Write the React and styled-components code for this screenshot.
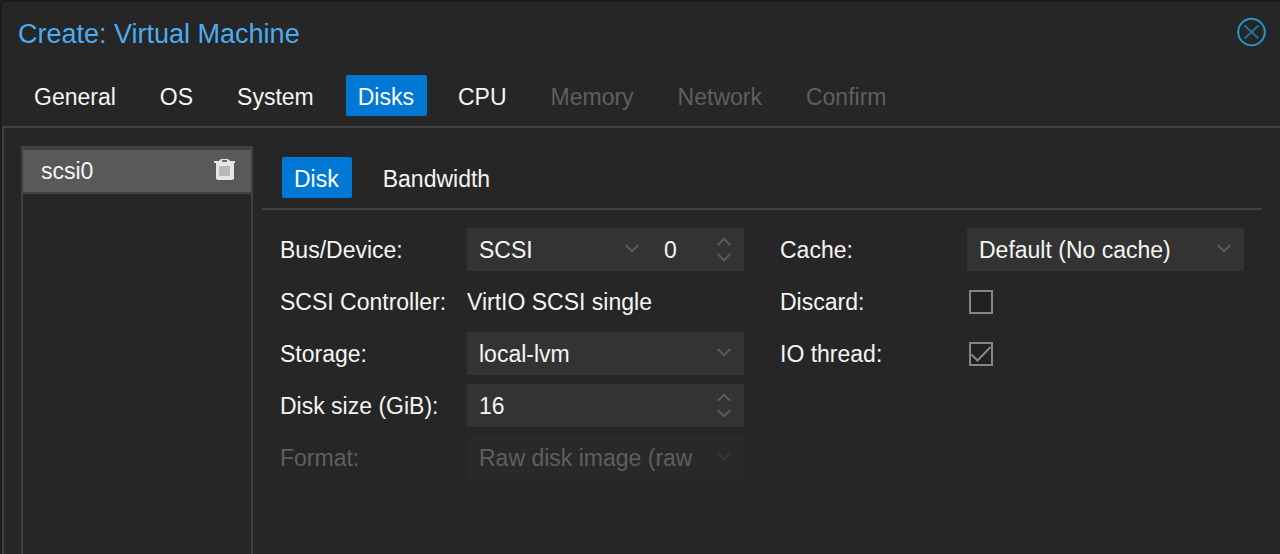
import React, { useState } from "react";
import styled, { createGlobalStyle } from "styled-components";

const GlobalStyle = createGlobalStyle`
  * { box-sizing: border-box; }
  html, body { margin: 0; background: #262626; }
  body, button, input, select {
    font-family: "Liberation Sans", Arial, sans-serif;
    font-size: 23px;
    line-height: 28px;
    color: #f5f5f5;
  }
`;

const Dialog = styled.main`
  display: flex;
  flex-direction: column;
  min-height: 100vh;
  background: #262626;
  border: 2px solid #1b1b1b;
  border-width: 2px 0 0 2px;
  border-top-left-radius: 4px;
`;

const TitleBar = styled.header`
  display: flex;
  align-items: center;
  justify-content: space-between;
  height: 60px;
  padding: 0 14px 0 16px;
`;

const Title = styled.h1`
  margin: 0;
  padding-top: 4px;
  font-size: 27px;
  line-height: 32px;
  font-weight: 400;
  color: #4dabf0;
`;

const CloseButton = styled.button`
  display: flex;
  padding: 0;
  border: 0;
  background: none;
`;

const TabBar = styled.nav`
  display: flex;
  gap: 18px;
  padding: ${(p) => (p.$inner ? "11px 20px 10px" : "13px 20px 10px")};
  border-bottom: 2px solid #404040;
`;

const Tab = styled.button`
  height: 41px;
  padding: 2px 13px 0 12px;
  border: 0;
  border-radius: 2px;
  white-space: nowrap;
  background: ${(p) => (p.$active ? "#0078d4" : "transparent")};
  color: ${(p) => (p.$active ? "#ffffff" : "#f5f5f5")};
  &:disabled { color: #5f5f5f; }
  & + & { margin-left: 1px; }
`;

const Body = styled.section`
  display: flex;
  flex: 1;
  gap: 9px;
  padding: 18px 18px 0 17px;
  border-left: 2px solid #404040;
`;

const DiskList = styled.aside`
  flex: 0 0 232px;
  border: 2px solid #404040;
  border-width: 4px 2px 0;
`;

const DiskRow = styled.div`
  display: flex;
  align-items: center;
  justify-content: space-between;
  height: 44px;
  padding: 0 16px 0 18px;
  background: #595959;
  border-bottom: 2px solid #404040;
`;

const IconButton = styled(CloseButton)`
  padding-bottom: 4px;
`;

const Panel = styled.div`
  flex: 1;
  min-width: 0;
`;

const Form = styled.form`
  display: grid;
  grid-template-columns: 1fr 1fr;
  align-items: start;
  gap: 36px;
  padding: 18px;
`;

const Column = styled.div`
  display: grid;
  gap: 9px;
`;

const Row = styled.div`
  display: grid;
  grid-template-columns: 187px minmax(0, 1fr);
  align-items: center;
  height: 43px;
`;

const Label = styled.label`
  white-space: nowrap;
  color: ${(p) => (p.$muted ? "#5f5f5f" : "#f5f5f5")};
`;

const Pair = styled.div`
  display: grid;
  grid-template-columns: minmax(0, 1fr) 92px;
`;

const Control = styled.div`
  display: grid;
  grid-template-columns: minmax(0, 1fr);
  align-items: center;
  height: 43px;
  background: ${(p) => (p.$muted ? "#292929" : "#333333")};
  color: ${(p) => (p.$muted ? "#383838" : "#5a5a5a")};
  & > * { grid-area: 1 / 1; }
  & > svg { justify-self: end; margin: 0 13px 2px 0; pointer-events: none; }
`;

const Select = styled.select`
  width: 100%;
  height: 43px;
  padding: 0 52px 0 12px;
  appearance: none;
  border: 0;
  background: transparent;
  &:disabled { color: #5f5f5f; opacity: 1; }
`;

const NumberInput = styled.input`
  width: 100%;
  height: 43px;
  padding: 1px 40px 0 12px;
  border: 0;
  background: transparent;
`;

const Spinner = styled.div`
  display: grid;
  justify-self: end;
  gap: 7px;
  margin-right: 13px;
`;

const SpinButton = styled(CloseButton)`
  color: #5a5a5a;
`;

const Checkbox = styled.span`
  display: grid;
  width: 24px;
  height: 24px;
  margin-left: 2px;
  & > * { grid-area: 1 / 1; }
  & > svg { pointer-events: none; }
`;

const CheckInput = styled.input`
  width: 24px;
  height: 24px;
  margin: 0;
  appearance: none;
  border: 2px solid #868686;
  background: #212121;
`;

function Chevron({ up }) {
  return (
    <svg width="14" height="9" viewBox="0 0 14 9" fill="none" stroke="currentColor" strokeWidth="2" aria-hidden="true">
      <path d={up ? "M0.700 8 L7 1.700 L13.300 8" : "M0.700 1 L7 7.300 L13.300 1"} />
    </svg>
  );
}

function SelectField({ id, value, disabled, label }) {
  return (
    <Control $muted={disabled}>
      <Select id={id} disabled={disabled} aria-label={label}>
        <option>{value}</option>
      </Select>
      <Chevron />
    </Control>
  );
}

function NumberField({ id, initial, label }) {
  const [value, setValue] = useState(initial);
  return (
    <Control>
      <NumberInput id={id} aria-label={label} inputMode="numeric" value={value} onChange={(e) => setValue(e.target.value)} />
      <Spinner>
        <SpinButton type="button" aria-label="Increase" onClick={() => setValue(Number(value) + 1)}>
          <Chevron up />
        </SpinButton>
        <SpinButton type="button" aria-label="Decrease" onClick={() => setValue(Math.max(0, Number(value) - 1))}>
          <Chevron />
        </SpinButton>
      </Spinner>
    </Control>
  );
}

function CheckField({ id, initial }) {
  const [checked, setChecked] = useState(initial);
  return (
    <Checkbox>
      <CheckInput type="checkbox" id={id} checked={checked} onChange={() => setChecked(!checked)} />
      {checked && (
        <svg width="24" height="24" viewBox="0 0 24 24" fill="none" stroke="#868686" strokeWidth="2" aria-hidden="true">
          <path d="M2.500 12.500 L8.500 18.500 L21.500 5" />
        </svg>
      )}
    </Checkbox>
  );
}

const steps = [
  { name: "General" },
  { name: "OS" },
  { name: "System" },
  { name: "Disks", active: true },
  { name: "CPU" },
  { name: "Memory", disabled: true },
  { name: "Network", disabled: true },
  { name: "Confirm", disabled: true },
];

export default function App() {
  return (
    <Dialog>
      <GlobalStyle />
      <TitleBar>
        <Title>Create: Virtual Machine</Title>
        <CloseButton type="button" aria-label="Close">
          <svg width="30" height="30" viewBox="0 0 30 30" fill="none" strokeWidth="2" aria-hidden="true">
            <circle cx="15.500" cy="15" r="13.3" stroke="#2b93c4" />
            <path d="M8.500 8.500 L22.500 21.500 M22.500 8.500 L8.500 21.500" stroke="#1b75a3" />
          </svg>
        </CloseButton>
      </TitleBar>
      <TabBar>
        {steps.map((s) => (
          <Tab key={s.name} type="button" $active={s.active} disabled={s.disabled}>
            {s.name}
          </Tab>
        ))}
      </TabBar>
      <Body>
        <DiskList>
          <DiskRow>
            <span>scsi0</span>
            <IconButton type="button" aria-label="Remove disk">
              <svg width="21" height="21" viewBox="0 0 21 21" aria-hidden="true">
                <path d="M5 2 Q6 0 8 0 H13 Q15 0 16 2 H21 V4 H20 V19 Q20 21 18 21 H4 Q2 21 2 19 V4 H0 V2 H5 Z" fill="#e6e6e6" />
                <path d="M8 1 H13 V3 H8 Z" fill="#6b6b6b" />
                <path d="M5 7 H16 V17 H5 Z" fill="#b9b9b9" />
              </svg>
            </IconButton>
          </DiskRow>
        </DiskList>
        <Panel>
          <TabBar $inner as="div">
            <Tab type="button" $active>Disk</Tab>
            <Tab type="button">Bandwidth</Tab>
          </TabBar>
          <Form>
            <Column>
              <Row>
                <Label htmlFor="bus">Bus/Device:</Label>
                <Pair>
                  <SelectField id="bus" value="SCSI" />
                  <NumberField id="device" initial="0" label="Device number" />
                </Pair>
              </Row>
              <Row>
                <Label as="span">SCSI Controller:</Label>
                <span>VirtIO SCSI single</span>
              </Row>
              <Row>
                <Label htmlFor="storage">Storage:</Label>
                <SelectField id="storage" value="local-lvm" />
              </Row>
              <Row>
                <Label htmlFor="size">Disk size (GiB):</Label>
                <NumberField id="size" initial="16" />
              </Row>
              <Row>
                <Label htmlFor="format" $muted>Format:</Label>
                <SelectField id="format" value="Raw disk image (raw)" disabled />
              </Row>
            </Column>
            <Column>
              <Row>
                <Label htmlFor="cache">Cache:</Label>
                <SelectField id="cache" value="Default (No cache)" />
              </Row>
              <Row>
                <Label htmlFor="discard">Discard:</Label>
                <CheckField id="discard" initial={false} />
              </Row>
              <Row>
                <Label htmlFor="iothread">IO thread:</Label>
                <CheckField id="iothread" initial={true} />
              </Row>
            </Column>
          </Form>
        </Panel>
      </Body>
    </Dialog>
  );
}
